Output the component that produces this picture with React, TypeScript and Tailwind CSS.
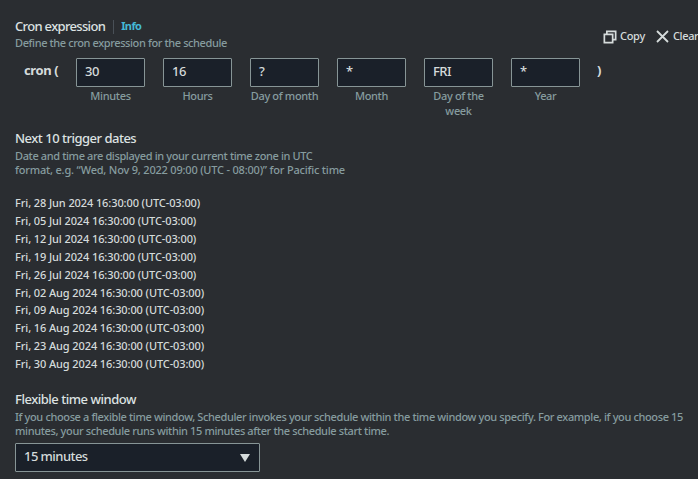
const fields = [
  { value: '30', label: 'Minutes' },
  { value: '16', label: 'Hours' },
  { value: '?', label: 'Day of month' },
  { value: '*', label: 'Month' },
  { value: 'FRI', label: 'Day of the week' },
  { value: '*', label: 'Year' },
];

const dates = ['28 Jun', '05 Jul', '12 Jul', '19 Jul', '26 Jul', '02 Aug', '09 Aug', '16 Aug', '23 Aug', '30 Aug'];

const heading = 'text-[13px] leading-[18px] font-medium text-[#dde2e2]';
const hint = 'text-[11px] leading-[14px] font-medium text-[#869c9f]';

function CopyIcon() {
  return (
    <svg className="shrink-0" width="14" height="14" viewBox="0 0 14 14" fill="none" stroke="#d5dbdb" strokeWidth="1.7">
      <path d="M3.85 4V1.35h8.8v8.3H10" />
      <path d="M1.35 4.35h8.3v8.3h-8.3z" />
    </svg>
  );
}

function ClearIcon() {
  return (
    <svg width="13" height="13" viewBox="0 0 13 13" fill="none" stroke="#d5dbdb" strokeWidth="1.8">
      <path d="M1 1l11 11M12 1L1 12" />
    </svg>
  );
}

export default function App() {
  return (
    <div className="h-[479px] w-[698px] overflow-hidden bg-[#2a2d31] pt-[16px] pl-[15px] font-['Noto_Sans',sans-serif] text-[#d5dbdb]">
      <div className="flex justify-between">
        <div>
          <div className="flex items-center">
            <h2 className={`${heading} tracking-[-0.67px]`}>Cron expression</h2>
            <span className="mt-[3px] ml-[8px] h-[14px] w-px bg-[#495057]" />
            <a className="ml-[7px] pt-[1px] text-[11px] leading-[18px] font-bold tracking-[-0.6px] text-[#44b9d6]">Info</a>
          </div>
          <p className={`mt-[1px] tracking-[-0.4px] ${hint}`}>Define the cron expression for the schedule</p>
        </div>
        <div className="mt-[11px] flex h-[18px] w-[95px] items-center text-[11px] leading-[18px] font-medium whitespace-nowrap">
          <span className="mt-[2px] flex shrink-0">
            <CopyIcon />
          </span>
          <span className="ml-[3px] w-[26px] tracking-[-0.3px]">Copy</span>
          <span className="mt-[1px] ml-[11px] flex shrink-0">
            <ClearIcon />
          </span>
          <span className="ml-[4px] tracking-[-0.35px]">Clear</span>
        </div>
      </div>

      <div className="mt-[8px] flex h-[62px]">
        <span className="w-[61px] pl-[9px] text-[13px] leading-[25px] font-bold tracking-[-0.4px]">cron (</span>
        <div className="flex gap-[18px]">
          {fields.map(({ value, label }) => (
            <div key={label} className="w-[69px]">
              <div className="h-[29px] rounded-[1px] border border-[#879596] bg-[#1a2029] pl-[8px] text-[13px] leading-[25px] font-medium tracking-[-0.5px]">
                {value}
              </div>
              <p className="mt-[1px] text-center text-[11px] leading-[15px] font-medium tracking-[-0.35px] text-[#869c9f]">{label}</p>
            </div>
          ))}
        </div>
        <span className="ml-[17px] text-[13px] leading-[25px] font-bold">)</span>
      </div>

      <h2 className={`mt-[9px] tracking-[-0.5px] ${heading}`}>Next 10 trigger dates</h2>
      <p className={`mt-[2px] w-[340px] whitespace-nowrap ${hint}`}>
        <span className="tracking-[-0.38px]">Date and time are displayed in your current time zone in UTC</span>
        <br />
        <span className="tracking-[-0.2px]">format, e.g. “Wed, Nov 9, 2022 09:00 (UTC - 08:00)” for Pacific time</span>
      </p>

      <ul className="mt-[17px] text-[11px] leading-[17.9px] font-medium tracking-[-0.1px]">
        {dates.map((date) => (
          <li key={date}>Fri, {date} 2024 16:30:00 (UTC-03:00)</li>
        ))}
      </ul>

      <h2 className={`mt-[17px] tracking-[-0.48px] ${heading}`}>Flexible time window</h2>
      <p className={`mt-[2px] w-[680px] tracking-[-0.37px] whitespace-nowrap ${hint}`}>
        If you choose a flexible time window, Scheduler invokes your schedule within the time window you specify. For example, if you choose 15
        <br />
        minutes, your schedule runs within 15 minutes after the schedule start time.
      </p>
      <div className="mt-[5px] flex h-[29px] w-[245px] justify-between rounded-[1px] border border-[#879596] bg-[#1a2029] pr-[9px] pl-[8px] text-[13px] leading-[25px] font-medium tracking-[-0.55px]">
        <span>15 minutes</span>
        <svg className="mt-[10px]" width="10" height="8" viewBox="0 0 10 8" fill="#d5dbdb">
          <path d="M0 0h10L5 8z" />
        </svg>
      </div>
    </div>
  );
}
